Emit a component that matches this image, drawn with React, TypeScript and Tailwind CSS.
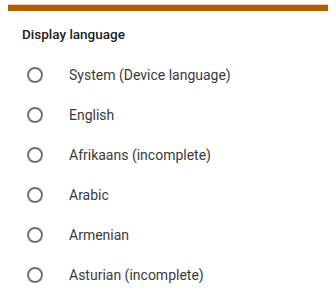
import React from "react";

const languages = [
  "System (Device language)",
  "English",
  "Afrikaans (incomplete)",
  "Arabic",
  "Armenian",
  "Asturian (incomplete)",
];

const App: React.FC = () => {
  return (
    <div
      className="w-[336px] h-[290px] bg-white overflow-hidden"
      style={{ fontFamily: "Roboto, 'Liberation Sans', sans-serif" }}
    >
      {/* app bar peeking out behind the dialog */}
      <div className="pt-[4px] px-[8px]">
        <div className="h-[7px] bg-[#b25f02] border-t border-[#e6cdb8]" />
      </div>

      <div className="pt-[13px]">
        <h2 className="pl-[22px] text-[13.5px] leading-[20px] font-medium text-[#212121]">
          Display language
        </h2>

        <ul className="mt-[11px]">
          {languages.map((lang) => (
            <li key={lang} className="h-[40px] flex items-center pl-[27px]">
              <span className="w-[16px] h-[16px] rounded-full border-2 border-[#737373] shrink-0" />
              <span className="ml-[26px] text-[14px] text-[#3a3a3a]">{lang}</span>
            </li>
          ))}
        </ul>
      </div>
    </div>
  );
};

export default App;
